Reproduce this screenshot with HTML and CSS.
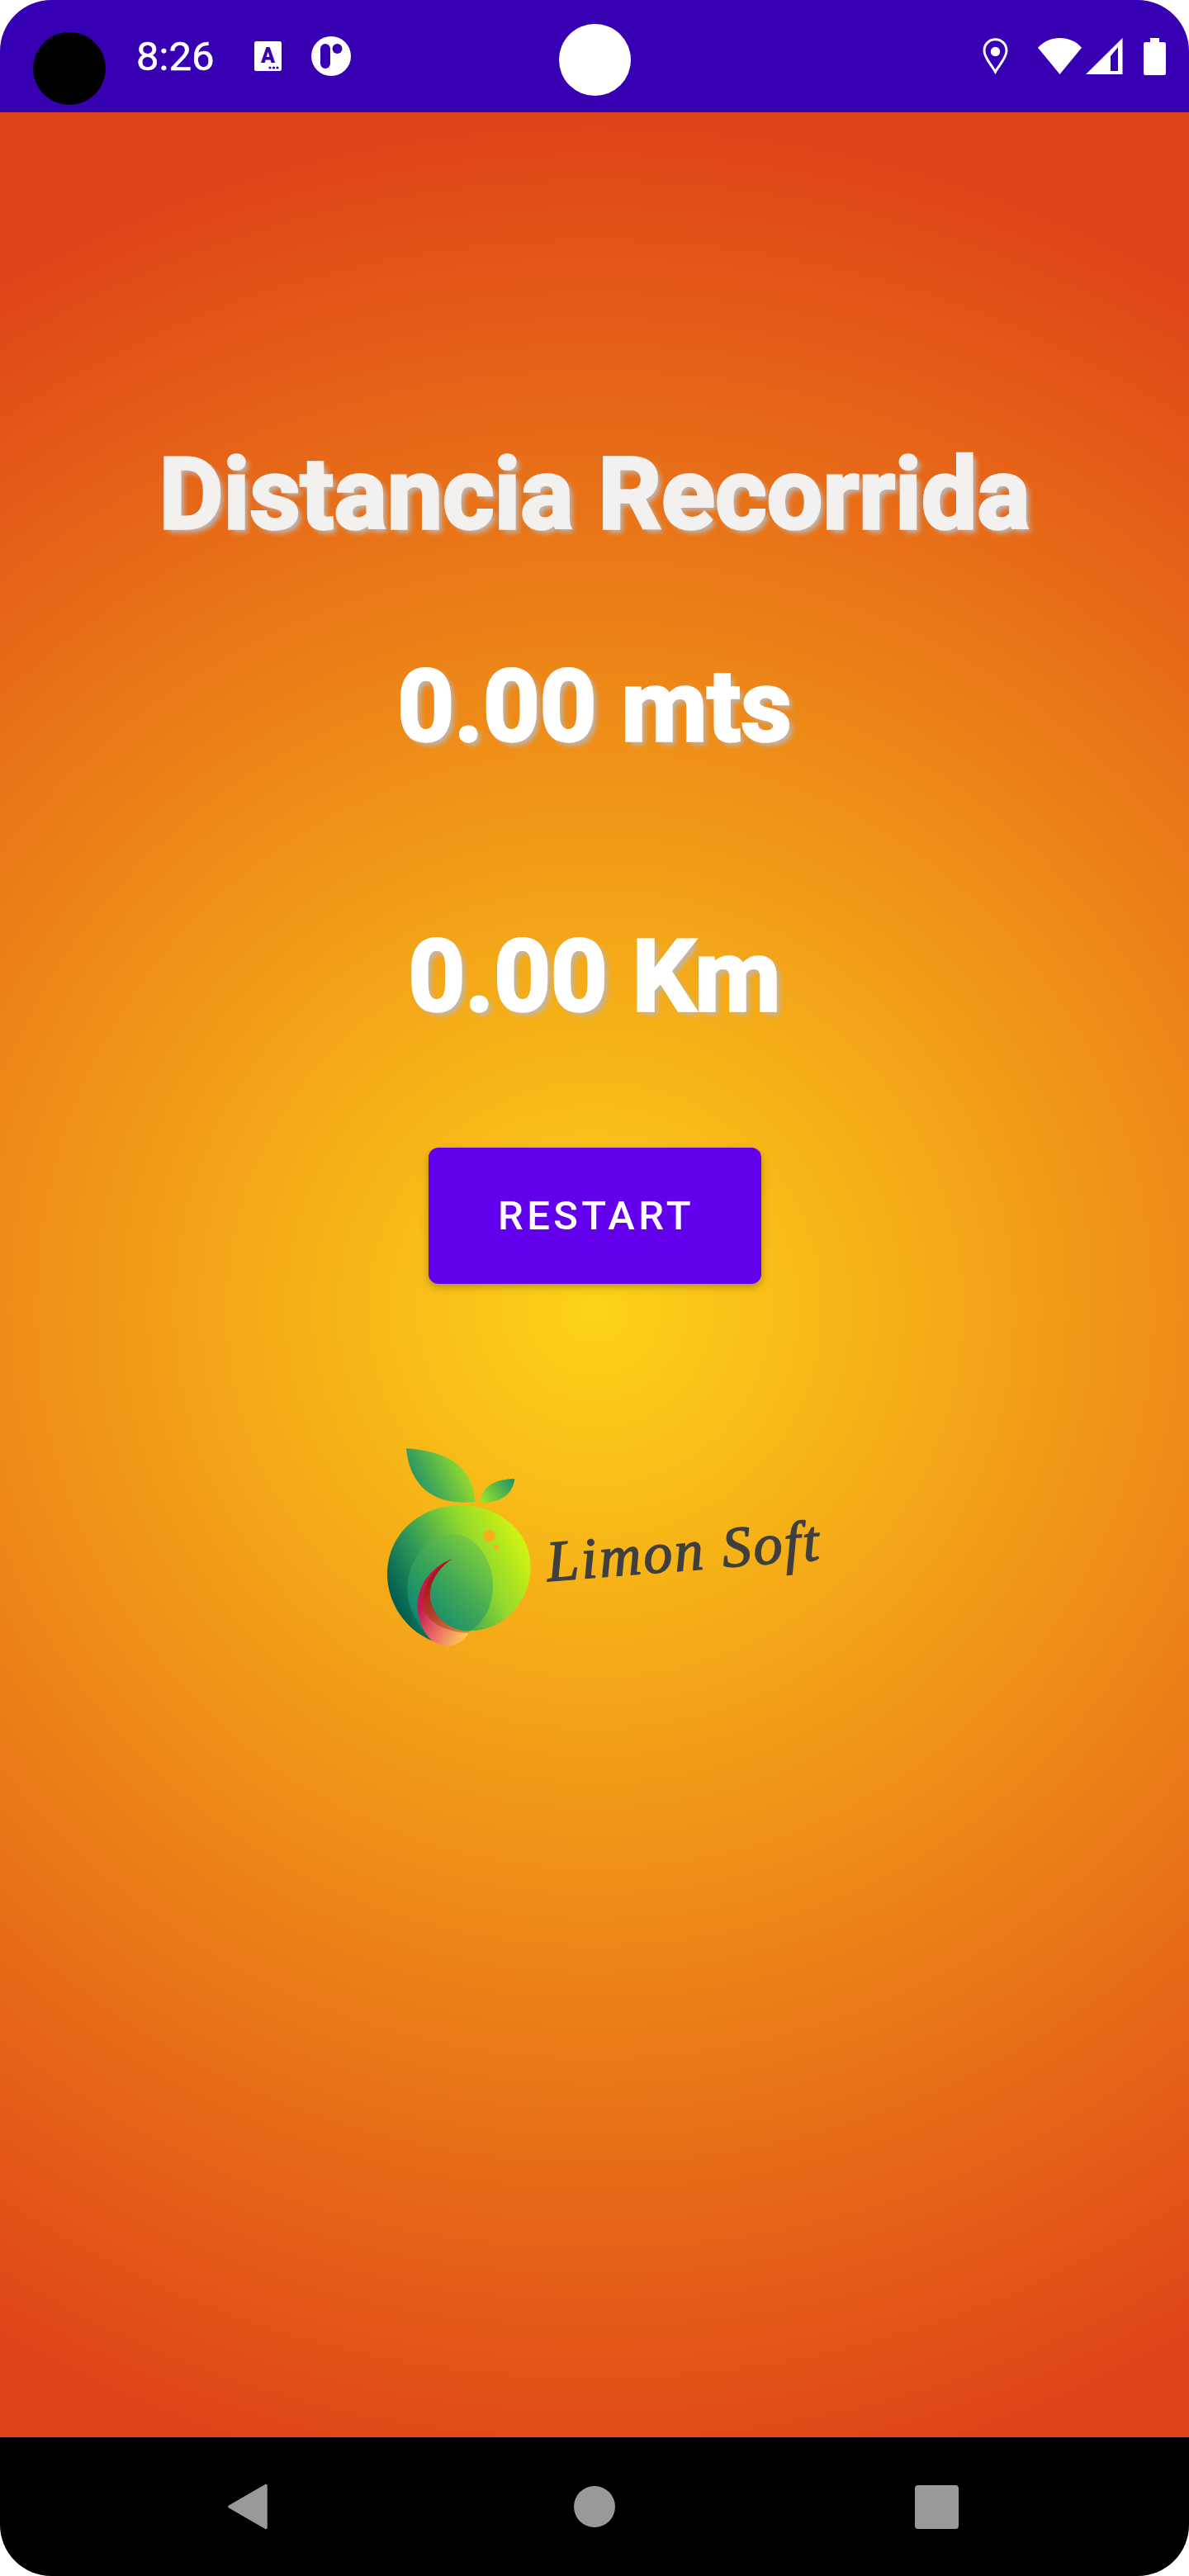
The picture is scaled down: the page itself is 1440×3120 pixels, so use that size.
FILE: index.html
```html
<!DOCTYPE html>
<html lang="es">
<head>
<meta charset="utf-8">
<title>Distancia Recorrida</title>
<link rel="stylesheet" href="styles.css">
</head>
<body>
<div class="phone">
  <header class="status">
    <div class="status-left">
      <div class="camera"></div>
      <span class="time">8:26</span>
      <svg class="ic-a" viewBox="0 0 33 36" width="33" height="36">
        <rect width="33" height="36" rx="2.5" fill="#fff"/>
        <text x="16.5" y="26" class="ic-a-letter">A</text>
        <circle cx="19" cy="32" r="1.6" fill="#3700b3"/><circle cx="23.5" cy="32" r="1.6" fill="#3700b3"/><circle cx="28" cy="32" r="1.6" fill="#3700b3"/>
      </svg>
      <svg class="ic-t" viewBox="0 0 48 48" width="48" height="48">
        <circle cx="24" cy="24" r="24" fill="#fff"/>
        <rect x="11" y="9" width="12" height="30" rx="6" fill="#3700b3"/>
        <circle cx="31.5" cy="15" r="6" fill="#3700b3"/>
      </svg>
    </div>
    <div class="punch"></div>
    <div class="status-right">
      <svg class="ic-loc" viewBox="0 0 31 44" width="31" height="44">
        <path d="M15.5 41C11 33 2 24 2 15.5C2 7.5 8 1.7 15.5 1.7S29 7.5 29 15.5C29 24 20 33 15.500 41Z" fill="none" stroke="#fff" stroke-width="3"/>
        <circle cx="15.500" cy="16.500" r="5.700" fill="#fff"/>
      </svg>
      <svg class="ic-wifi" viewBox="0 0 53 44" width="53" height="44">
        <path d="M0 11.700C7 4 16 0 26.500 0S46 4 53 11.700L26.500 44Z" fill="#fff"/>
      </svg>
      <svg class="ic-sig" viewBox="0 0 45 44" width="45" height="44">
        <path fill-rule="evenodd" d="M0 44L44.500 0V44ZM30 40H39V11L30 22Z" fill="#fff"/>
      </svg>
      <svg class="ic-bat" viewBox="0 0 27 45" width="27" height="45">
        <path d="M8 0H19V5H24.500A2.500 2.500 0 0 1 27 7.500V42.500A2.500 2.500 0 0 1 24.500 45H2.500A2.500 2.500 0 0 1 0 42.500V7.500A2.500 2.500 0 0 1 2.500 5H8Z" fill="#fff"/>
      </svg>
    </div>
  </header>

  <main class="screen">
    <h1 class="reading reading-title">Distancia Recorrida</h1>
    <p class="reading reading-mts">0.00 mts</p>
    <p class="reading reading-km">0.00 Km</p>
    <button class="restart" type="button">RESTART</button>
    <div class="logo">
      <svg class="logo-mark" viewBox="0 0 585 750" width="195" height="250">
        <defs>
          <linearGradient id="leafA" gradientUnits="userSpaceOnUse" x1="130" y1="180" x2="340" y2="80">
            <stop offset="0" stop-color="#1f8f66"/><stop offset="0.5" stop-color="#5dbb48"/><stop offset="1" stop-color="#a6e526"/>
          </linearGradient>
          <linearGradient id="leafB" gradientUnits="userSpaceOnUse" x1="370" y1="205" x2="490" y2="125">
            <stop offset="0" stop-color="#9be02a"/><stop offset="0.5" stop-color="#5dbb48"/><stop offset="1" stop-color="#1a9065"/>
          </linearGradient>
          <linearGradient id="fruitOuter" gradientUnits="userSpaceOnUse" x1="70" y1="610" x2="540" y2="370">
            <stop offset="0" stop-color="#005c52"/><stop offset="0.3" stop-color="#2f9a58"/><stop offset="0.65" stop-color="#90d82e"/><stop offset="1" stop-color="#d2f410"/>
          </linearGradient>
          <linearGradient id="fruitInner" gradientUnits="userSpaceOnUse" x1="130" y1="640" x2="400" y2="390">
            <stop offset="0" stop-color="#0b8672"/><stop offset="0.5" stop-color="#3fa658"/><stop offset="1" stop-color="#80d03c"/>
          </linearGradient>
          <linearGradient id="tail" gradientUnits="userSpaceOnUse" x1="140" y1="610" x2="310" y2="700">
            <stop offset="0" stop-color="#c61a4e"/><stop offset="0.4" stop-color="#e65f66"/><stop offset="1" stop-color="#ffcb55"/>
          </linearGradient>
          <linearGradient id="tailBand" gradientUnits="userSpaceOnUse" x1="190" y1="480" x2="320" y2="680">
            <stop offset="0" stop-color="#a31818"/><stop offset="0.5" stop-color="#b5402c"/><stop offset="1" stop-color="#d88a3c"/>
          </linearGradient>
        </defs>
        <path d="M96 13C205 20 335 50 346 208C230 218 112 180 96 13Z" fill="url(#leafA)"/>
        <path d="M490 123C430 125 375 140 363 208C420 216 482 190 490 123Z" fill="url(#leafB)"/>
        <path d="M27 470C27 330 140 220 290 220C440 220 548 320 548 440C548 570 450 675 330 675L190 712C90 670 27 570 27 470Z" fill="url(#fruitOuter)"/>
        <path d="M100 520C100 420 180 325 265 325C350 325 411 420 411 510C411 590 375 645 330 675L190 712C130 650 100 590 100 520Z" fill="url(#fruitInner)"/>
        <circle cx="398" cy="330" r="22" fill="#f9ae1b"/>
        <circle cx="422" cy="372" r="9" fill="#f9ae1b"/>
        <path d="M262 415C190 440 135 510 137 590C139 640 160 685 190 712C215 732 250 735 275 725C300 715 315 700 322 682C260 680 195 630 183 560C178 500 210 450 262 415Z" fill="url(#tail)"/>
        <path d="M262 415C200 440 150 510 158 590C170 640 230 678 322 684V676C260 676 195 630 183 560C178 500 210 450 262 415Z" fill="url(#tailBand)"/>
      </svg>
      <span class="logo-name">Limon Soft</span>
    </div>
  </main>

  <nav class="navbar">
    <svg class="nav-back" viewBox="0 0 49 56" width="49" height="56">
      <path d="M46 2.500V53.500L2 28Z" fill="#999" stroke="#999" stroke-width="3.500" stroke-linejoin="round"/>
    </svg>
    <div class="nav-home"></div>
    <div class="nav-recent"></div>
  </nav>
</div>
</body>
</html>
```
FILE: styles.css
```css
html, body {
  margin: 0;
  padding: 0;
  background: #fff;
}

.phone {
  width: 1440px;
  height: 3120px;
  display: flex;
  flex-direction: column;
  border-radius: 62px;
  overflow: hidden;
  font-family: Roboto, sans-serif;
}

.status {
  height: 136px;
  flex: none;
  background: #3700b3;
  display: grid;
  grid-template-columns: 1fr 87px 1fr;
  align-items: center;
}

.status-left {
  display: flex;
  align-items: center;
  padding-left: 40px;
}

.camera {
  width: 88px;
  height: 88px;
  margin-top: 30px;
  border-radius: 50%;
  background: #000;
}

.time {
  margin-left: 37px;
  margin-top: 2px;
  font-size: 49px;
  line-height: 56px;
  color: #fff;
  -webkit-text-stroke: 0.5px #fff;
}

.ic-a {
  margin-left: 49px;
  flex: none;
}

.ic-a-letter {
  font-family: Roboto, sans-serif;
  font-size: 25px;
  font-weight: 900;
  text-anchor: middle;
  fill: #3700b3;
}

.ic-t {
  margin-left: 36px;
  flex: none;
}

.punch {
  width: 87px;
  height: 87px;
  border-radius: 50%;
  background: #fff;
  margin-top: 8px;
}

.status-right {
  display: flex;
  align-items: center;
  justify-content: flex-end;
  padding-right: 28px;
}

.status-right svg {
  flex: none;
}

.ic-wifi { margin-left: 36px; }
.ic-sig { margin-left: 5px; }
.ic-bat { margin-left: 25px; }

.screen {
  flex: 1;
  display: flex;
  flex-direction: column;
  align-items: center;
  padding-top: 393px;
  background: radial-gradient(circle 1450px at 720px 1450px, #fdd317 0%, #df4318 100%);
}

.reading {
  margin: 0;
  font-size: 120px;
  line-height: 140px;
  font-weight: 700;
  white-space: nowrap;
  color: #fff;
  -webkit-text-stroke: 3.5px currentColor;
  text-shadow: 5px 5px 6px #bdb7b2;
}

.reading-title {
  color: #f2f1f0;
}

.reading-mts {
  margin-top: 117px;
}

.reading-km {
  margin-top: 187px;
}

.restart {
  width: 403px;
  height: 165px;
  margin-top: 137px;
  border: 0;
  padding: 0 0 0 4px;
  border-radius: 12px;
  background: #6200ee;
  color: #fff;
  font-family: Roboto, sans-serif;
  font-size: 49px;
  font-weight: 500;
  letter-spacing: 4.4px;
  box-shadow: 0 4px 10px rgba(0, 0, 0, 0.25);
}

.logo {
  display: flex;
  align-items: flex-start;
  align-self: flex-start;
  margin-top: 195px;
  margin-left: 460px;
}

.logo-mark {
  flex: none;
}

.logo-name {
  margin-left: 10px;
  margin-top: 102px;
  font-family: "Liberation Serif", serif;
  font-style: italic;
  font-size: 70px;
  letter-spacing: 2.8px;
  line-height: 80px;
  white-space: nowrap;
  color: #3f3f3f;
  -webkit-text-stroke: 1.6px #3f3f3f;
  transform: rotate(-4.5deg);
  transform-origin: 0 100%;
}

.navbar {
  height: 168px;
  flex: none;
  background: #000;
  display: flex;
  align-items: center;
  padding-left: 276px;
}

.nav-home {
  width: 50px;
  height: 50px;
  margin-left: 370px;
  border-radius: 50%;
  background: #999;
}

.nav-recent {
  width: 53px;
  height: 53px;
  margin-left: 363px;
  border-radius: 4px;
  background: #999;
}
```
